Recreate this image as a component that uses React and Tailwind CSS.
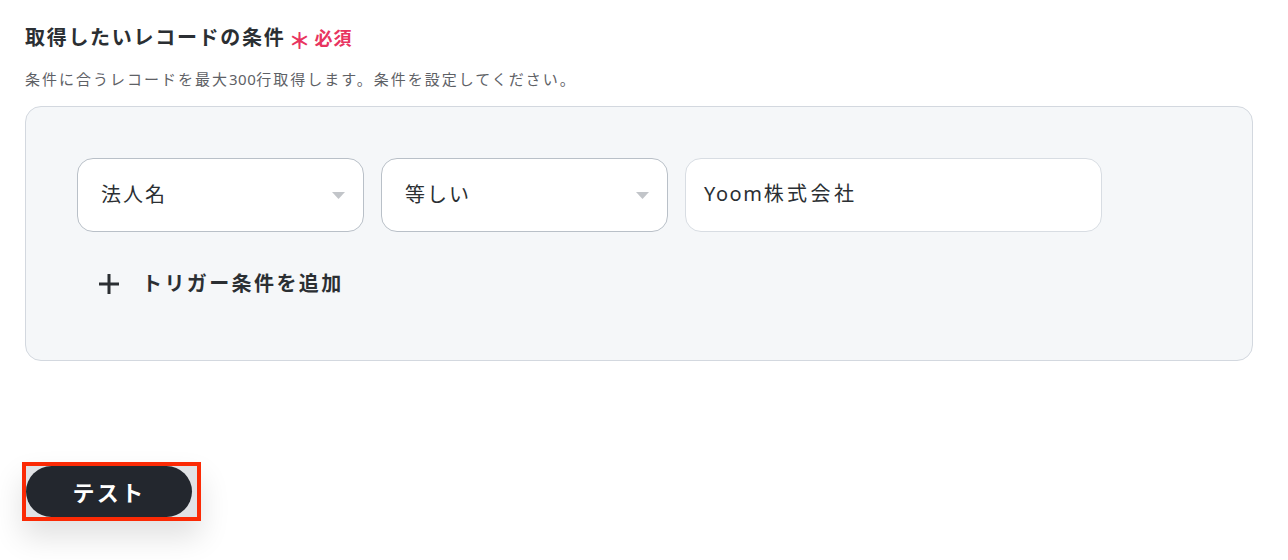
export default function App() {
  const font = { fontFamily: '"Noto Sans", "Noto Sans CJK JP", sans-serif' };
  return (
    <div className="w-[1288px] h-[560px] bg-white overflow-hidden text-[#2b2f33]" style={font}>
      <div className="pl-[25px] pr-[35px] pt-[24px]">
        <div className="flex items-center h-[28px]">
          <span className="text-[20px] font-semibold leading-[28px] tracking-[1.7px]">取得したいレコードの条件</span>
          <span className="ml-[3px] text-[#e8345f] text-[22px] font-bold leading-[28px] mt-[4px]">＊</span>
          <span className="ml-[4px] text-[#e8345f] text-[18px] font-bold leading-[28px] tracking-[1px]">必須</span>
        </div>
        <p className="mt-[16px] text-[15px] leading-[22px] text-[#5e6166] tracking-[2px]">条件に合うレコードを最大<span className="tracking-[0.5px]">300</span>行取得します。条件を設定してください。</p>
        <div className="mt-[16px] h-[255px] rounded-[16px] border border-[#d3d8df] bg-[#f5f7f9] pl-[51px] pt-[51px]">
          <div className="flex gap-[17px]">
            <div className="w-[287px] h-[74px] rounded-[16px] border border-[#b9c0c8] bg-white flex items-center justify-between pl-[23px] pr-[18px]">
              <span className="text-[20px] leading-[28px] tracking-[2px]">法人名</span>
              <svg width="13" height="7" viewBox="0 0 13 7"><path d="M0 0 L13 0 L6.5 7 Z" fill="#c2c5c9" /></svg>
            </div>
            <div className="w-[287px] h-[74px] rounded-[16px] border border-[#b9c0c8] bg-white flex items-center justify-between pl-[23px] pr-[18px]">
              <span className="text-[20px] leading-[28px] tracking-[2px]">等しい</span>
              <svg width="13" height="7" viewBox="0 0 13 7"><path d="M0 0 L13 0 L6.5 7 Z" fill="#c2c5c9" /></svg>
            </div>
            <div className="w-[417px] h-[74px] rounded-[16px] border border-[#d8dde3] bg-white flex items-center pl-[18px]">
              <span className="text-[20px] leading-[28px] -mt-[3px]"><span className="tracking-[1.6px]">Yoom</span><span className="tracking-[3.5px]">株式会社</span></span>
            </div>
          </div>
          <div className="flex items-center mt-[38px] ml-[22px] h-[28px]">
            <svg width="20" height="20" viewBox="0 0 20 20"><path d="M10 0 V20 M0 10 H20" stroke="#2b2f33" strokeWidth="3" /></svg>
            <span className="ml-[23px] text-[20px] font-bold leading-[28px] tracking-[2.4px]">トリガー条件を追加</span>
          </div>
        </div>
      </div>
      <div className="pl-[22px] mt-[101px]">
        <div className="w-[179px] h-[59px] border-[4px] border-[#fb2a05] bg-[#e1e3e6] shadow-[0_16px_30px_rgba(0,0,0,0.12)]">
          <div className="w-[166px] h-[51px] rounded-full bg-[#23272e] text-white flex items-center justify-center text-[22px] font-bold tracking-[2.4px] leading-none">テスト</div>
        </div>
      </div>
    </div>
  );
}
